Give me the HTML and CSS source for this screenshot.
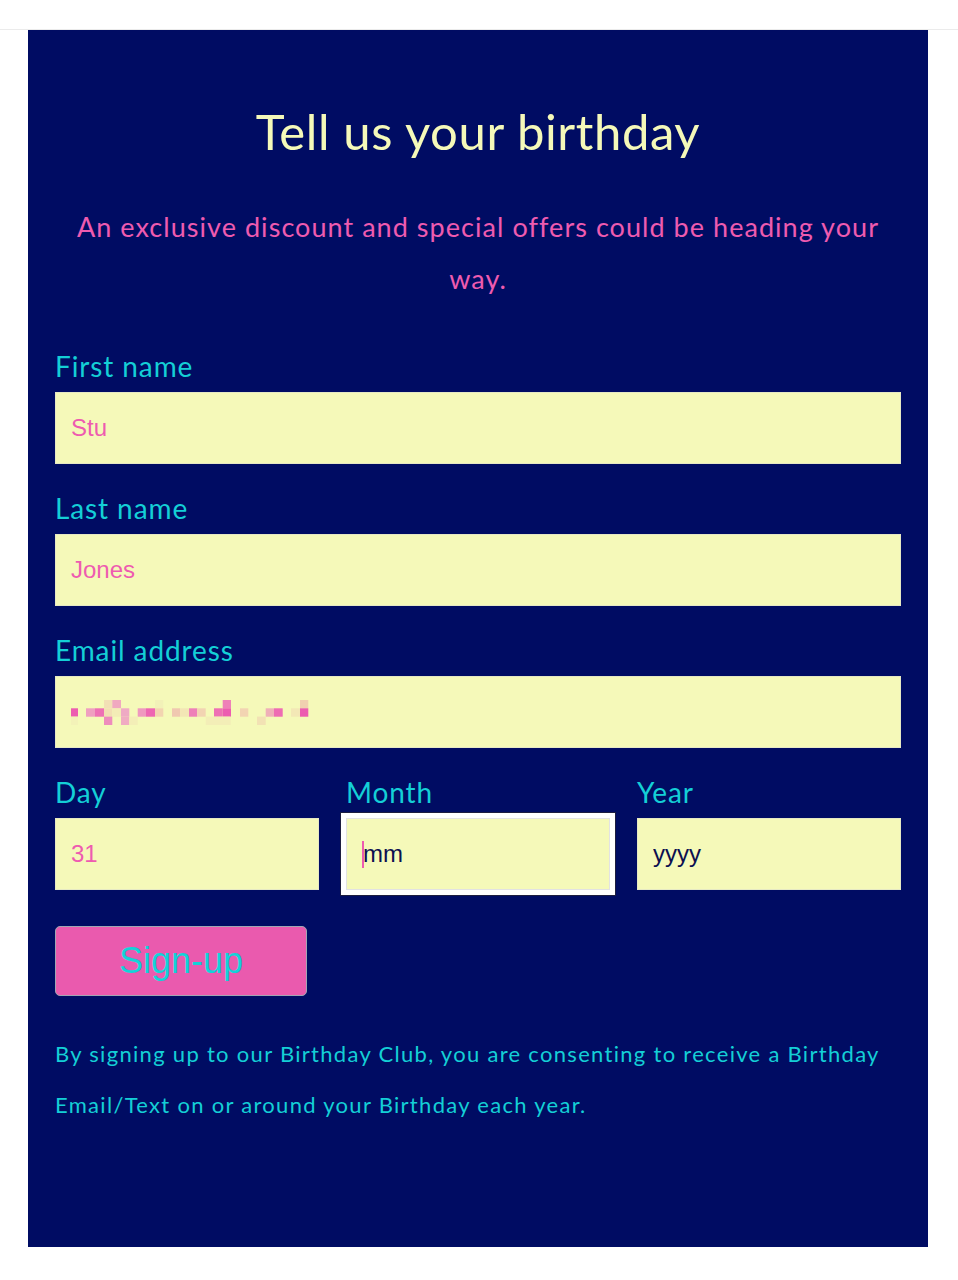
FILE: index.html
```html
<!DOCTYPE html>
<html lang="en">
<head>
<meta charset="utf-8">
<title>Birthday Club</title>
<link rel="stylesheet" href="styles.css">
</head>
<body>
<div class="topbar"></div>
<main class="card">
  <h1 class="title">Tell us your birthday</h1>
  <p class="subtitle">An exclusive discount and special offers could be heading your way.</p>
  <form class="form">
    <div class="field">
      <label class="label" for="first">First name</label>
      <input class="input" id="first" type="text" value="Stu">
    </div>
    <div class="field">
      <label class="label" for="last">Last name</label>
      <input class="input" id="last" type="text" value="Jones">
    </div>
    <div class="field">
      <label class="label">Email address</label>
      <div class="input input-box">
        <svg class="pixelated" width="240" height="25" viewBox="0 0 240 25" aria-hidden="true">
          <rect x="33" y="0" width="8.5" height="8.4" fill="#f2dfb5"/>
          <rect x="41.3" y="0" width="8.7" height="8.4" fill="#f0a8c0"/>
          <rect x="84" y="0" width="8.3" height="8.4" fill="#f2f1b8"/>
          <rect x="151.7" y="0" width="8.3" height="8.4" fill="#ee80b8"/>
          <rect x="229" y="0" width="8.3" height="8.4" fill="#f0d0b0"/>

          <rect x="0" y="8.3" width="7" height="8.4" fill="#ec5cb0"/>
          <rect x="15" y="8.3" width="9" height="8.4" fill="#ef9fc0"/>
          <rect x="24" y="8.3" width="9" height="8.4" fill="#ee70b4"/>
          <rect x="33" y="8.3" width="8.3" height="8.4" fill="#f2deb3"/>
          <rect x="41.3" y="8.3" width="8.7" height="8.4" fill="#f3ecb6"/>
          <rect x="50" y="8.3" width="8.3" height="8.4" fill="#efaac4"/>
          <rect x="66.7" y="8.3" width="8.3" height="8.4" fill="#ef98bf"/>
          <rect x="75" y="8.3" width="9" height="8.4" fill="#ee66b2"/>
          <rect x="84" y="8.3" width="8.3" height="8.4" fill="#f2d4b0"/>
          <rect x="101" y="8.3" width="8.3" height="8.4" fill="#f0c8b0"/>
          <rect x="109.3" y="8.3" width="8.7" height="8.4" fill="#f3e6b5"/>
          <rect x="118" y="8.3" width="8.3" height="8.4" fill="#ee80b8"/>
          <rect x="126.3" y="8.3" width="8.4" height="8.4" fill="#f2d4b2"/>
          <rect x="143" y="8.3" width="8.7" height="8.4" fill="#ee70b4"/>
          <rect x="151.7" y="8.3" width="8.3" height="8.4" fill="#ec5cb0"/>
          <rect x="169" y="8.3" width="8.3" height="8.4" fill="#f2d4b2"/>
          <rect x="194.7" y="8.3" width="8.3" height="8.4" fill="#efb0b8"/>
          <rect x="203" y="8.3" width="8.7" height="8.4" fill="#ee6cb3"/>
          <rect x="220" y="8.3" width="9" height="8.4" fill="#f3e8b6"/>
          <rect x="229" y="8.3" width="8.3" height="8.4" fill="#ec5cb0"/>

          <rect x="0" y="16.6" width="7" height="8.4" fill="#f3f2b8"/>
          <rect x="33" y="16.6" width="8.3" height="8.4" fill="#ee8cbc"/>
          <rect x="50" y="16.6" width="8.3" height="8.4" fill="#f0acc2"/>
          <rect x="58.3" y="16.6" width="8.4" height="8.4" fill="#f3eeb7"/>
          <rect x="134.7" y="16.6" width="25" height="8.4" fill="#f3eeb7"/>
          <rect x="186" y="16.6" width="8.7" height="8.4" fill="#f2e2b4"/>
        </svg>
      </div>
    </div>
    <div class="date-row">
      <div class="field">
        <label class="label" for="day">Day</label>
        <input class="input" id="day" type="text" value="31">
      </div>
      <div class="field">
        <label class="label">Month</label>
        <div class="input input-box is-focused"><span class="caret"></span>mm</div>
      </div>
      <div class="field">
        <label class="label" for="year">Year</label>
        <input class="input input-dark" id="year" type="text" value="yyyy">
      </div>
    </div>
    <button class="submit" type="button">Sign-up</button>
  </form>
  <p class="note">By signing up to our Birthday Club, you are consenting to receive a Birthday Email/Text on or around your Birthday each year.</p>
</main>
</body>
</html>
```
FILE: styles.css
```css
body {
  margin: 0;
  background: #ffffff;
  font-family: Lato, "Noto Sans", sans-serif;
}

.topbar {
  height: 29px;
  border-bottom: 1px solid #ebebeb;
}

.card {
  width: 900px;
  min-height: 1217px;
  margin-left: 28px;
  box-sizing: border-box;
  padding: 72px 27px 40px;
  background: #000c63;
}

.title {
  margin: 0;
  font-size: 49px;
  line-height: 58px;
  font-weight: 400;
  letter-spacing: 0.6px;
  color: #f5f9b9;
  text-align: center;
}

.subtitle {
  margin: 41px 0 0;
  font-size: 27px;
  line-height: 52px;
  letter-spacing: 1.05px;
  color: #ee5bb0;
  text-align: center;
}

.form {
  margin-top: 43px;
  display: flex;
  flex-direction: column;
  gap: 26px;
}

.field {
  display: flex;
  flex-direction: column;
  gap: 8px;
}

.label {
  font-size: 28px;
  line-height: 36px;
  letter-spacing: 0.9px;
  color: #14cfd6;
}

.input {
  display: block;
  width: 100%;
  height: 72px;
  box-sizing: border-box;
  margin: 0;
  border: 1px solid #e6e9c4;
  background: #f5f9b9;
  padding: 0 15px;
  font-family: "Liberation Sans", Arial, sans-serif;
  font-size: 24px;
  color: #ee5bb0;
  outline: none;
}

.input-box {
  display: flex;
  align-items: center;
}

.input-dark {
  color: #0d1050;
}

.is-focused {
  color: #0d1050;
  border-color: #e2e2e2;
  outline: 5px solid #ffffff;
  box-shadow: 0 0 0 6px #1c1d3f;
}

.caret {
  display: inline-block;
  width: 2px;
  height: 27px;
  margin-right: -1px;
  background: #ee5bb0;
}

.date-row {
  display: grid;
  grid-template-columns: repeat(3, 1fr);
  gap: 27px;
}

.submit {
  margin-top: 10px;
  width: 252px;
  height: 70px;
  border: 1px solid #a0a6b4;
  border-radius: 5px;
  background: #ea5aae;
  color: #14d2d8;
  font-family: "Liberation Sans", Arial, sans-serif;
  font-size: 36px;
  padding: 0;
}

.note {
  margin: 32px 0 0;
  font-size: 22px;
  line-height: 51px;
  letter-spacing: 1.3px;
  color: #14cfd6;
}
```
